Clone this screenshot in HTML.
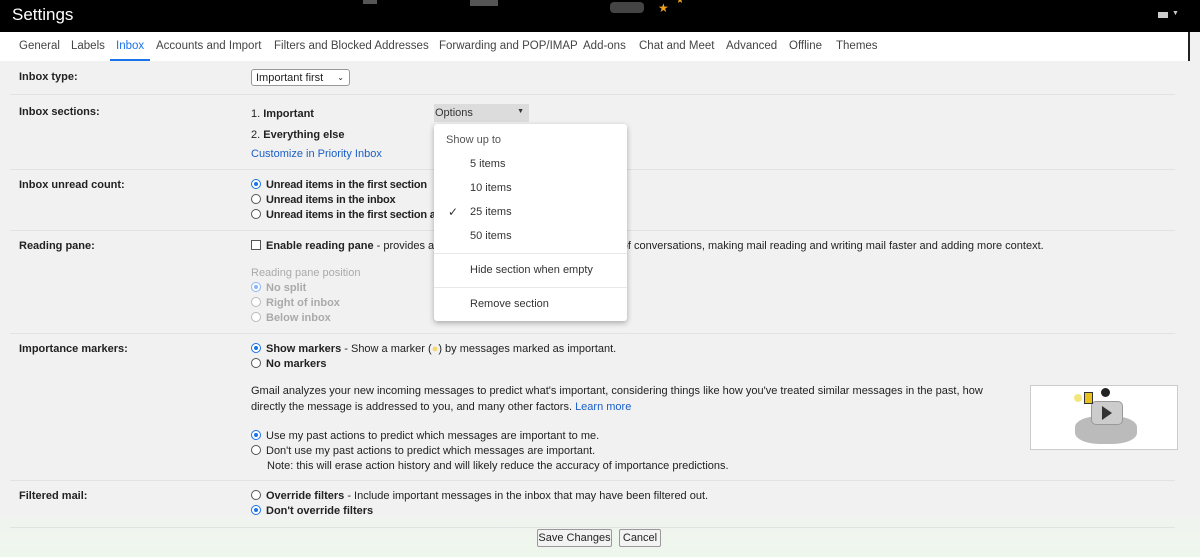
<!DOCTYPE html>
<html><head><meta charset="utf-8"><style>
*{margin:0;padding:0;box-sizing:border-box}
body{width:1200px;height:557px;overflow:hidden;background:#f1f1f1;font-family:"Liberation Sans",Arial,sans-serif;font-size:11px;color:#222;position:relative}
.a{position:absolute;white-space:nowrap}
.top{left:0;top:0;width:1200px;height:32px;background:#000}
.tabs{left:0;top:32px;width:1190px;height:29px;background:#fff;border-right:2px solid #222}
.tab{position:absolute;top:8px;font-size:11.5px;color:#444}
b{font-weight:bold;color:#222}
.hr{position:absolute;left:10px;width:1165px;height:1px;background:#e2e2e2}
.lbl{font-weight:bold;color:#222}
.r{display:inline-block;width:10px;height:10px;border:1px solid #555;border-radius:50%;vertical-align:-1px;margin-right:5px;position:relative;background:#fff}
.r.on{border-color:#1a73e8}
.r.on:after{content:"";position:absolute;left:2px;top:2px;width:4px;height:4px;border-radius:50%;background:#1a73e8}
.r.dis{border-color:#bbb}
.r.dis.on{border-color:#8ab4f8}.r.dis.on:after{background:#8ab4f8}
.g{color:#aaa;font-weight:bold}
.menu{left:434px;top:124px;width:193px;height:197px;background:#fff;border-radius:3px;box-shadow:0 2px 6px rgba(0,0,0,.3);font-size:11px;color:#333}
.mi{position:absolute;left:36px}
.btn{position:absolute;top:529px;height:18px;line-height:16px;border:1px solid #999;border-radius:2px;background:#f3f3f3;font-size:11px;text-align:center;color:#222}
.t{letter-spacing:-0.2px}
</style></head><body>
<div class="a top"></div>
<div class="a" style="left:12px;top:5px;color:#fff;font-size:17px">Settings</div>
<div class="a" style="left:363px;top:0;width:14px;height:4px;background:#555"></div>
<div class="a" style="left:470px;top:0;width:28px;height:6px;background:#555"></div>
<div class="a" style="left:610px;top:2px;width:34px;height:11px;background:#444;border-radius:4px"></div>
<div class="a" style="left:658px;top:1px;color:#f0a020;font-size:12px">★</div>
<div class="a" style="left:676px;top:-5px;color:#f0a020;font-size:9px">★</div>
<div class="a" style="left:1158px;top:12px;width:10px;height:6px;background:#ccc"></div>
<div class="a" style="left:1172px;top:10px;color:#ccc;font-size:7px">▼</div>
<div class="a tabs">
<span class="tab" style="left:19px">General</span>
<span class="tab" style="left:71px">Labels</span>
<span class="tab" style="left:116px;color:#1a73e8">Inbox</span>
<div style="position:absolute;left:110px;top:27px;width:40px;height:2px;background:#1a73e8"></div>
<span class="tab" style="left:156px">Accounts and Import</span>
<span class="tab" style="left:274px">Filters and Blocked Addresses</span>
<span class="tab" style="left:439px">Forwarding and POP/IMAP</span>
<span class="tab" style="left:583px">Add-ons</span>
<span class="tab" style="left:639px">Chat and Meet</span>
<span class="tab" style="left:726px">Advanced</span>
<span class="tab" style="left:789px">Offline</span>
<span class="tab" style="left:836px">Themes</span>
</div>

<div class="a lbl" style="left:19px;top:71px">Inbox type:</div>
<div class="a" style="left:251px;top:69px;width:99px;height:17px;border:1px solid #999;border-radius:3px;background:#fff;padding:2px 4px">Important first <span style="position:absolute;right:5px;font-size:8px;top:3px">⌄</span></div>
<div class="hr" style="top:94px"></div>

<div class="a lbl" style="left:19px;top:106px">Inbox sections:</div>
<div class="a" style="left:251px;top:108px">1. <b>Important</b></div>
<div class="a" style="left:434px;top:104px;width:95px;height:18px;background:#dcdcdc;padding:3px 0 0 1px;color:#333">Options<span style="position:absolute;right:5px;top:4px;font-size:7px">▼</span></div>
<div class="a" style="left:251px;top:129px">2. <b>Everything else</b></div>
<div class="a" style="left:251px;top:148px;color:#1a5fc8">Customize in Priority Inbox</div>
<div class="hr" style="top:169px"></div>

<div class="a lbl" style="left:19px;top:179px">Inbox unread count:</div>
<div class="a t" style="left:251px;top:179px"><span class="r on"></span><b>Unread items in the first section</b></div>
<div class="a t" style="left:251px;top:194px"><span class="r"></span><b>Unread items in the inbox</b></div>
<div class="a t" style="left:251px;top:209px"><span class="r"></span><b>Unread items in the first section and</b></div>
<div class="hr" style="top:230px"></div>

<div class="a lbl" style="left:19px;top:240px">Reading pane:</div>
<div class="a" style="left:251px;top:240px"><span style="display:inline-block;width:10px;height:10px;border:1px solid #555;background:#fff;vertical-align:-1px;margin-right:5px"></span><b>Enable reading pane</b> - provides a way to read mail right next to your list of conversations, making mail reading and writing mail faster and adding more context.</div>
<div class="a" style="left:251px;top:267px;color:#aaa">Reading pane position</div>
<div class="a g" style="left:251px;top:282px"><span class="r dis on"></span>No split</div>
<div class="a g" style="left:251px;top:297px"><span class="r dis"></span>Right of inbox</div>
<div class="a g" style="left:251px;top:312px"><span class="r dis"></span>Below inbox</div>
<div class="hr" style="top:333px"></div>

<div class="a lbl" style="left:19px;top:343px">Importance markers:</div>
<div class="a" style="left:251px;top:343px"><span class="r on"></span><b>Show markers</b> - Show a marker (<span style="color:#f5d76e">●</span>) by messages marked as important.</div>
<div class="a" style="left:251px;top:358px"><span class="r"></span><b>No markers</b></div>
<div class="a" style="left:251px;top:384px;line-height:15.5px;white-space:normal;width:740px">Gmail analyzes your new incoming messages to predict what's important, considering things like how you've treated similar messages in the past, how directly the message is addressed to you, and many other factors. <span style="color:#1a5fc8">Learn more</span></div>
<div class="a" style="left:251px;top:430px"><span class="r on"></span>Use my past actions to predict which messages are important to me.</div>
<div class="a" style="left:251px;top:445px"><span class="r"></span>Don't use my past actions to predict which messages are important.</div>
<div class="a" style="left:267px;top:460px">Note: this will erase action history and will likely reduce the accuracy of importance predictions.</div>
<div class="a" style="left:1030px;top:385px;width:148px;height:65px;background:#fff;border:1px solid #ccc">
<div style="position:absolute;left:44px;top:30px;width:62px;height:28px;background:#bbb;border-radius:40%"></div>
<div style="position:absolute;left:60px;top:15px;width:32px;height:24px;background:#ccc;border-radius:5px;border:1px solid #999"></div>
<div style="position:absolute;left:71px;top:20px;width:0;height:0;border-left:10px solid #333;border-top:7px solid transparent;border-bottom:7px solid transparent"></div>
<div style="position:absolute;left:43px;top:8px;width:8px;height:8px;border-radius:50%;background:#f3e67a"></div>
<div style="position:absolute;left:53px;top:6px;width:9px;height:12px;background:#e8c020;border:1px solid #333"></div>
<div style="position:absolute;left:70px;top:2px;width:9px;height:9px;border-radius:50%;background:#222"></div>
</div>
<div class="hr" style="top:480px"></div>

<div class="a" style="left:0;top:515px;width:1200px;height:42px;background:linear-gradient(#f1f3f0,#eef7ec)"></div>
<div class="a lbl" style="left:19px;top:490px">Filtered mail:</div>
<div class="a" style="left:251px;top:490px"><span class="r"></span><b>Override filters</b> - Include important messages in the inbox that may have been filtered out.</div>
<div class="a" style="left:251px;top:505px"><span class="r on"></span><b>Don't override filters</b></div>
<div class="hr" style="top:527px"></div>
<div class="btn" style="left:537px;width:75px">Save Changes</div>
<div class="btn" style="left:619px;width:42px">Cancel</div>

<div class="a menu">
<div class="mi" style="left:12px;top:10px;color:#555">Show up to</div>
<div class="mi" style="top:34px">5 items</div>
<div class="mi" style="top:58px">10 items</div>
<div class="mi" style="left:14px;top:81px;font-size:12px">✓</div>
<div class="mi" style="top:82px">25 items</div>
<div class="mi" style="top:106px">50 items</div>
<div style="position:absolute;left:0;top:129px;width:193px;height:1px;background:#e8e8e8"></div>
<div class="mi" style="top:140px">Hide section when empty</div>
<div style="position:absolute;left:0;top:163px;width:193px;height:1px;background:#e8e8e8"></div>
<div class="mi" style="top:174px">Remove section</div>
</div>
</body></html>
